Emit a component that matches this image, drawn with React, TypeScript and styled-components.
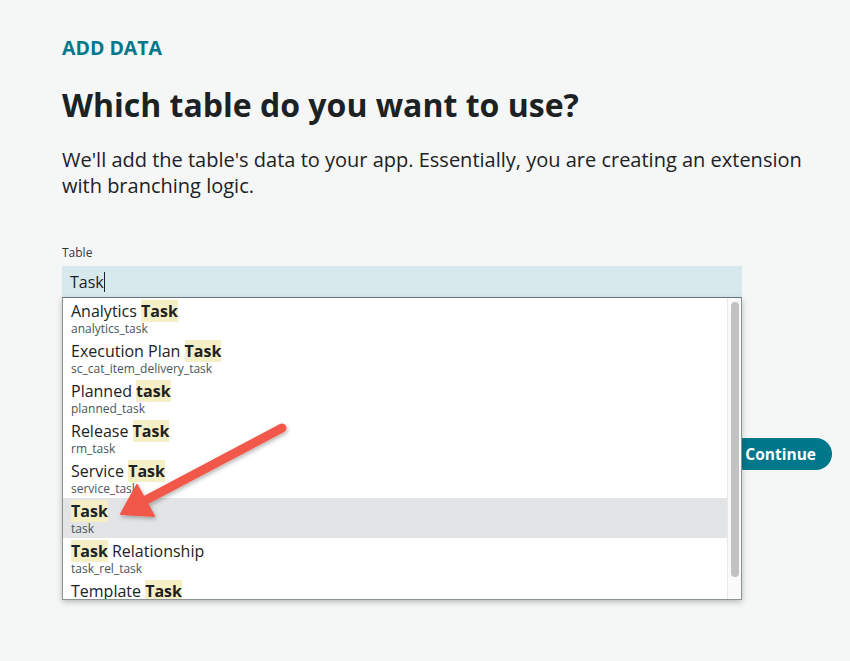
import React from "react";
import styled, { createGlobalStyle } from "styled-components";

const GlobalStyle = createGlobalStyle`
  html, body { margin: 0; padding: 0; background: #f5f6f6; }
  body { font-family: "Open Sans", "Noto Sans", sans-serif; color: #1c2224; }
`;

const Page = styled.div`
  position: relative;
  width: 850px;
  height: 661px;
  box-sizing: border-box;
  padding: 35px 18px 0 62px;
  display: flex;
  flex-direction: column;
`;

const Eyebrow = styled.div`
  font-size: 19.5px;
  font-weight: 700;
  color: #00778b;
  line-height: 26px;
`;

const Heading = styled.h1`
  margin: 22px 0 0;
  font-size: 32px;
  font-weight: 700;
  line-height: 44px;
  color: #1c2224;
`;

const Lead = styled.p`
  margin: 20px 0 0;
  font-size: 20px;
  line-height: 26px;
  width: 760px;
  color: #1c2224;
`;

const Field = styled.div`
  margin-top: 46px;
  display: flex;
  flex-direction: column;
  width: 680px;
  position: relative;
`;

const Label = styled.label`
  font-size: 12px;
  line-height: 16px;
  color: #2e3a3d;
  margin-bottom: 5px;
`;

const InputBox = styled.div`
  height: 32px;
  background: #d8e9ee;
  border-bottom: 1px solid #6b7c80;
  box-sizing: border-box;
  padding: 0 8px;
  display: flex;
  align-items: center;
  font-size: 16px;
  color: #1c2224;
`;

const Caret = styled.span`
  display: inline-block;
  width: 1px;
  height: 20px;
  background: #1c2224;
`;

const Dropdown = styled.div`
  position: absolute;
  left: 0;
  top: 53px;
  width: 680px;
  height: 302px;
  box-sizing: border-box;
  background: #fff;
  border: 1px solid #8a9497;
  border-top: none;
  box-shadow: 0 2px 6px rgba(0, 0, 0, 0.25);
  display: flex;
  z-index: 2;
  overflow: hidden;
`;

const List = styled.div`
  flex: 1;
  display: flex;
  flex-direction: column;
`;

const Item = styled.div<{ $selected?: boolean }>`
  height: 40px;
  flex: none;
  box-sizing: border-box;
  padding: 2px 8px 0;
  background: ${(p) => (p.$selected ? "#e3e4e6" : "#fff")};
  display: flex;
  flex-direction: column;
`;

const Title = styled.div`
  font-size: 16px;
  line-height: 22px;
  color: #1c2224;
  white-space: nowrap;
`;

const Sub = styled.div`
  font-size: 12px;
  line-height: 14px;
  color: #47555a;
`;

const Mark = styled.span`
  background: #f4efc4;
  font-weight: 700;
`;

const Track = styled.div`
  width: 14px;
  flex: none;
  background: #fafafa;
  border-left: 1px solid #e8e8e8;
  box-sizing: border-box;
  padding: 4px 2px 0 3px;
`;

const Thumb = styled.div`
  height: 275px;
  background: #c2c2c2;
  border-radius: 4px;
`;

const Actions = styled.div`
  display: flex;
  justify-content: flex-end;
  margin-top: 140px;
  width: 770px;
`;

const ContinueButton = styled.button`
  height: 32px;
  padding: 0 16px;
  border: none;
  border-radius: 16px;
  background: #00778b;
  color: #fff;
  font-family: "Open Sans", sans-serif;
  font-weight: 700;
  font-size: 15.5px;
  cursor: pointer;
`;

const Annotation = styled.svg`
  position: absolute;
  left: 0;
  top: 0;
  width: 850px;
  height: 661px;
  pointer-events: none;
  z-index: 5;
  overflow: visible;
`;

type Row = { pre: string; hit: string; post: string; sub: string; selected?: boolean };

const rows: Row[] = [
  { pre: "Analytics ", hit: "Task", post: "", sub: "analytics_task" },
  { pre: "Execution Plan ", hit: "Task", post: "", sub: "sc_cat_item_delivery_task" },
  { pre: "Planned ", hit: "task", post: "", sub: "planned_task" },
  { pre: "Release ", hit: "Task", post: "", sub: "rm_task" },
  { pre: "Service ", hit: "Task", post: "", sub: "service_task" },
  { pre: "", hit: "Task", post: "", sub: "task", selected: true },
  { pre: "", hit: "Task", post: " Relationship", sub: "task_rel_task" },
  { pre: "Template ", hit: "Task", post: "", sub: "template_task" },
];

export default function App() {
  return (
    <>
      <GlobalStyle />
      <Page>
        <Eyebrow>ADD DATA</Eyebrow>
        <Heading>Which table do you want to use?</Heading>
        <Lead>
          We'll add the table's data to your app. Essentially, you are creating an extension
          with branching logic.
        </Lead>
        <Field>
          <Label>Table</Label>
          <InputBox>
            Task<Caret />
          </InputBox>
          <Dropdown>
            <List>
              {rows.map((r) => (
                <Item key={r.sub} $selected={r.selected}>
                  <Title>
                    {r.pre}
                    <Mark>{r.hit}</Mark>
                    {r.post}
                  </Title>
                  <Sub>{r.sub}</Sub>
                </Item>
              ))}
            </List>
            <Track>
              <Thumb />
            </Track>
          </Dropdown>
        </Field>
        <Actions>
          <ContinueButton>Continue</ContinueButton>
        </Actions>
        <Annotation viewBox="0 0 850 661">
          <defs>
            <filter id="sh" x="-20%" y="-20%" width="140%" height="140%">
              <feDropShadow dx="1" dy="2" stdDeviation="2" floodColor="#000" floodOpacity="0.3" />
            </filter>
          </defs>
          <g filter="url(#sh)" fill="#f2584a" stroke="#f2584a">
            <line x1="282" y1="428" x2="146" y2="500" strokeWidth="9" strokeLinecap="round" />
            <polygon points="121,514 137,485 154,516" strokeWidth="2" strokeLinejoin="round" />
          </g>
        </Annotation>
      </Page>
    </>
  );
}
